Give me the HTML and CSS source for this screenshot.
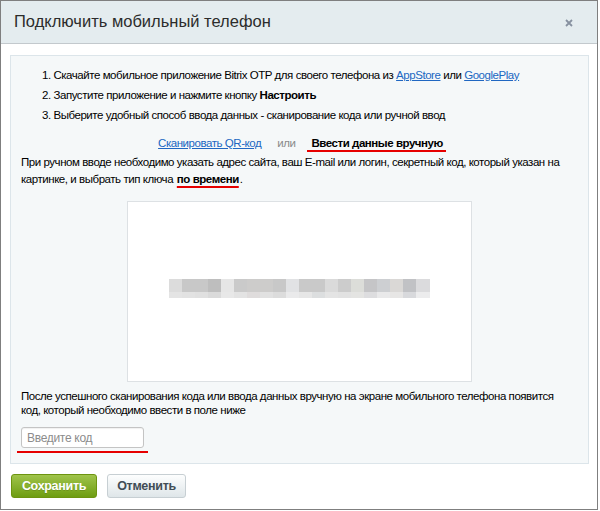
FILE: index.html
```html
<!DOCTYPE html>
<html lang="ru">
<head>
<meta charset="utf-8">
<link rel="stylesheet" href="styles.css">
</head>
<body>
<div class="dialog">
  <div class="head">
    <div class="title">Подключить мобильный телефон</div>
    <svg class="close" width="8" height="8" viewBox="0 0 8 8"><path d="M1 1L7 7M7 1L1 7" stroke="#8791a0" stroke-width="1.8" fill="none"/></svg>
  </div>
  <div class="panel">
    <div class="steps">
      <div class="step">1. Скачайте мобильное приложение Bitrix OTP для своего телефона из <a href="#">AppStore</a> или <a href="#">GooglePlay</a></div>
      <div class="step">2. Запустите приложение и нажмите кнопку <b>Настроить</b></div>
      <div class="step">3. Выберите удобный способ ввода данных - сканирование кода или ручной ввод</div>
    </div>
    <div class="modes">
      <a href="#" class="mode-link">Сканировать QR-код</a>
      <span class="or">или</span>
      <span class="mode-active">Ввести данные вручную</span>
    </div>
    <p class="text1">При ручном вводе необходимо указать адрес сайта, ваш E-mail или логин, секретный код, который указан на картинке, и выбрать тип ключа <b class="marked">по времени</b>.</p>
    <div class="picture">
      <div class="pix">
        <i style="background:#dcdcdc"></i><i style="background:#c8c8c8"></i><i style="background:#c8c8c8"></i><i style="background:#bebebe"></i><i style="background:#e6e6e6"></i><i style="background:#cacaca"></i><i style="background:#cdcccb"></i><i style="background:#cdcccb"></i><i style="background:#c8c8c8"></i><i style="background:#e1e2e4"></i><i style="background:#c9c9c9"></i><i style="background:#c9c9c9"></i><i style="background:#dadada"></i><i style="background:#cccccc"></i><i style="background:#dcddd9"></i><i style="background:#c5c5c7"></i><i style="background:#cdcfd2"></i><i style="background:#dad8d6"></i><i style="background:#c1c2c5"></i><i style="background:#dbdbdd"></i>
        <i style="background:#e4e4e4"></i><i style="background:#e2e2e2"></i><i style="background:#e0e0e0"></i><i style="background:#dadada"></i><i style="background:#e8e8e8"></i><i style="background:#e3e3e3"></i><i style="background:#dfdcdc"></i><i style="background:#e1e1e1"></i><i style="background:#dcdcdc"></i><i style="background:#eaeaeb"></i><i style="background:#e6e6e6"></i><i style="background:#dcdedf"></i><i style="background:#e4e4e4"></i><i style="background:#e2e2e2"></i><i style="background:#e4e4e2"></i><i style="background:#dddddf"></i><i style="background:#e9e9ea"></i><i style="background:#e7e6e5"></i><i style="background:#d8d9dc"></i><i style="background:#ececed"></i>
      </div>
    </div>
    <p class="text2">После успешного сканирования кода или ввода данных вручную на экране мобильного телефона появится<br>код, который необходимо ввести в поле ниже</p>
    <div class="field"><input class="code" type="text" placeholder="Введите код"></div>
  </div>
  <div class="buttons">
    <button class="btn btn-save">Сохранить</button>
    <button class="btn btn-cancel">Отменить</button>
  </div>
</div>
</body>
</html>
```
FILE: styles.css
```css
html, body {
  margin: 0;
  padding: 0;
  background: #ffffff;
}
body {
  font-family: "Liberation Sans", Arial, sans-serif;
  color: #000;
}
.dialog {
  width: 596px;
  height: 508px;
  border: 1px solid #7f7f7f;
  background: #fff;
  display: flex;
  flex-direction: column;
}
.head {
  height: 42px;
  background: #e4ecef;
  border-bottom: 1px solid #c3c9cd;
  display: flex;
  align-items: center;
  justify-content: space-between;
  padding: 0 24px 0 13px;
  flex-shrink: 0;
}
.title {
  font-size: 16.5px;
  color: #2c2c2c;
  margin-top: -1px;
}
.close {
  display: block;
  margin-top: 2px;
}
.panel {
  margin: 11px 8px 0 9px;
  height: 407px;
  background: #f5f8f9;
  border: 1px solid #dce5ea;
  padding: 0 10px;
  font-size: 11.5px;
  letter-spacing: -0.45px;
  color: #000;
}
.steps {
  padding: 9px 0 0 21px;
}
.step {
  line-height: 20px;
  height: 20px;
  white-space: nowrap;
}
a {
  color: #2067c2;
  text-decoration: underline;
}
.modes {
  margin-top: 8px;
  line-height: 20px;
  display: flex;
  justify-content: center;
  padding-left: 2px;
}
.mode-link {
  margin-right: 16px;
}
.or {
  color: #8a8a8a;
  margin-right: 16px;
}
.mode-active {
  font-weight: bold;
  position: relative;
}
.mode-active::after {
  content: "";
  position: absolute;
  left: -4px;
  right: -3px;
  bottom: 1px;
  height: 2px;
  background: #e60000;
}
.text1 {
  margin: 1px 0 0 0;
  line-height: 17px;
}
.marked {
  margin: 0 1px;
  text-decoration: underline;
  text-decoration-color: #e60000;
  text-decoration-thickness: 2px;
  text-underline-offset: 3px;
  text-decoration-skip-ink: none;
}
.picture {
  width: 343px;
  height: 179px;
  margin: 13px auto 0;
  background: #fff;
  border: 1px solid #dde1e4;
  display: flex;
  align-items: center;
  justify-content: center;
}
.pix {
  display: grid;
  grid-template-columns: repeat(19, 13px) 14px;
  grid-template-rows: 13px 6px;
  margin-top: -6px;
}
.pix i {
  display: block;
}
.text2 {
  margin: 7px 0 0 0;
  line-height: 14px;
}
.field {
  margin-top: 10px;
  display: inline-block;
  position: relative;
}
.field::after {
  content: "";
  position: absolute;
  left: -4px;
  right: -4px;
  bottom: -5px;
  height: 2px;
  background: #e60000;
}
.code {
  display: block;
  box-sizing: border-box;
  width: 123px;
  height: 21px;
  border: 1px solid #c4c4c4;
  border-radius: 3px;
  background: #fff;
  font-family: "Liberation Sans", Arial, sans-serif;
  font-size: 12px;
  letter-spacing: -0.3px;
  padding: 0 5px;
  margin: 0;
  box-shadow: inset 0 1px 1px rgba(0,0,0,0.06);
}
.code::placeholder {
  color: #8c8c8c;
}
.buttons {
  display: flex;
  gap: 10px;
  padding: 10px 0 0 10px;
}
.btn {
  box-sizing: border-box;
  height: 24px;
  border-radius: 3px;
  font-family: "Liberation Sans", Arial, sans-serif;
  font-size: 12.5px;
  letter-spacing: -0.3px;
  font-weight: bold;
  padding: 0;
  margin: 0;
  cursor: pointer;
}
.btn-save {
  width: 86px;
  color: #fff;
  border: 1px solid #6d9410;
  background: linear-gradient(#a0c44b, #6e9d12);
  text-shadow: 0 1px 0 rgba(0,0,0,0.15);
}
.btn-cancel {
  width: 79px;
  color: #414d55;
  border: 1px solid #c7cfd3;
  background: linear-gradient(#fdfefe, #dfe6e9);
}
```
